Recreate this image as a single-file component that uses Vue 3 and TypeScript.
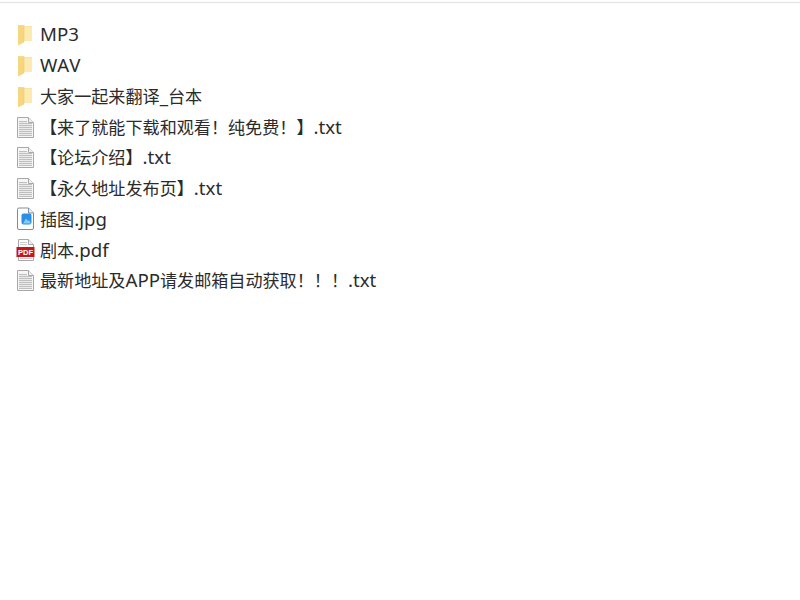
<template>
  <div class="page">
    <div class="top-rule"></div>
    <ul class="file-list">
      <li v-for="file in files" :key="file.name" class="file-row">
        <svg v-if="file.type === 'folder'" class="icon" viewBox="0 0 20 24">
          <path d="M2 3h6l1 1h7v15H2z" fill="#f7dc8f" />
          <path d="M8 4.500h8V19H8z" fill="#fdeab0" />
          <path d="M2 3l6 1.500V20l-6 3z" fill="#f6d67e" />
          <path d="M8 4.500V20l-6 3" fill="none" stroke="#eccb7c" stroke-width="0.600" />
        </svg>
        <svg v-else-if="file.type === 'txt'" class="icon" viewBox="0 0 20 24">
          <path d="M1.500 2.500h11l5 5v15h-16z" fill="#f6f6f6" stroke="#a8a8a8" />
          <path d="M12.500 2.500v5h5" fill="#f0f0f0" stroke="#a8a8a8" />
          <path d="M3 6h8v2h5v13H3z" fill="#ebebeb" />
          <path
            d="M3 6.500h8M3 8.500h13M3 10.500h13M3 12.500h13M3 14.500h13M3 16.500h13M3 18.500h13M3 20.500h13"
            stroke="#bfbfbf"
          />
        </svg>
        <svg v-else-if="file.type === 'image'" class="icon" viewBox="0 0 20 24">
          <path
            d="M1.500 2.500a1.500 1.500 0 0 1 1.500-1.500h9.500l5 5v15a1.500 1.500 0 0 1-1.500 1.500H3a1.500 1.500 0 0 1-1.500-1.500z"
            fill="#fff"
            stroke="#7d8c9c"
          />
          <path d="M12.500 1v5h5" fill="#e8eef4" stroke="#7d8c9c" />
          <rect x="5.500" y="6.500" width="10" height="11" rx="2" fill="#2a8fe6" />
          <path d="M7 16.500l3-5 2 2.500 1-1 2 3.500z" fill="#86c9f6" />
        </svg>
        <svg v-else class="icon" viewBox="0 0 20 24">
          <path d="M2.500 1.500h10l5 5v16h-15z" fill="#fff" stroke="#a8a8a8" />
          <path d="M12.500 1.500v5h5" fill="#f0f0f0" stroke="#a8a8a8" />
          <path d="M4 4.500h7M4 6.500h7M4 20.500h12" stroke="#cdcdcd" />
          <rect x="0.500" y="9" width="18" height="10" fill="#c4161c" />
          <text x="9.500" y="16.800" class="pdf-label">PDF</text>
        </svg>
        <span class="file-name">
          <span
            v-for="(part, i) in splitName(file.name)"
            :key="i"
            :class="{ latin: isLatin(part) }"
          >{{ part }}</span>
        </span>
      </li>
    </ul>
  </div>
</template>

<script setup lang="ts">
interface FileItem {
  name: string
  type: 'folder' | 'txt' | 'image' | 'pdf'
}

const files: FileItem[] = [
  { name: 'MP3', type: 'folder' },
  { name: 'WAV', type: 'folder' },
  { name: '大家一起来翻译_台本', type: 'folder' },
  { name: '【来了就能下载和观看\uFF01纯免费\uFF01】.txt', type: 'txt' },
  { name: '【论坛介绍】.txt', type: 'txt' },
  { name: '【永久地址发布页】.txt', type: 'txt' },
  { name: '插图.jpg', type: 'image' },
  { name: '剧本.pdf', type: 'pdf' },
  { name: '最新地址及APP请发邮箱自动获取\uFF01\uFF01\uFF01.txt', type: 'txt' }
]

// Latin runs are set a little larger than the CJK ones
const splitName = (name: string) => name.split(/([\x20-\x7e]+)/).filter(Boolean)
const isLatin = (part: string) => /^[\x20-\x7e]+$/.test(part)
</script>

<style>
html,
body {
  background: #fff;
}
</style>

<style scoped>
.page {
  height: 600px;
  font-family: "Noto Sans CJK SC", sans-serif;
  color: #2b2b2b;
  overflow: hidden;
}

.top-rule {
  height: 1px;
  margin-top: 2px;
  background: #e2e2e2;
}

.file-list {
  list-style: none;
  margin: 16px 0 0;
  padding: 0 0 0 16px;
}

.file-row {
  display: flex;
  align-items: center;
  gap: 4px;
  height: 30.75px;
  font-size: 17.1px;
  line-height: 24px;
  white-space: nowrap;
}

.latin {
  font-family: "Noto Sans", sans-serif;
  font-size: 18.67px;
  font-kerning: none;
}

.icon {
  width: 20px;
  height: 24px;
  flex: none;
}

.pdf-label {
  font-family: "Liberation Sans", sans-serif;
  font-size: 7.500px;
  font-weight: 700;
  fill: #fff;
  text-anchor: middle;
}
</style>
